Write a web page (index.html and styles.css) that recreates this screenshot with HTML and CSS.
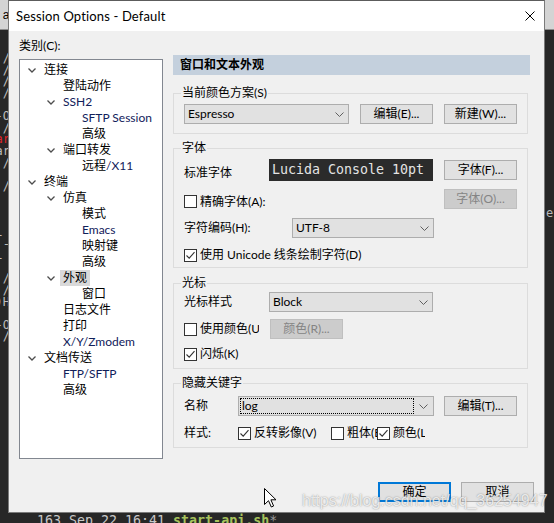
FILE: index.html
```html
<!DOCTYPE html>
<html lang="zh-CN">
<head>
<meta charset="utf-8">
<title>Session Options - Default</title>
<link rel="stylesheet" href="styles.css">
</head>
<body>
<div class="desk">
  <div class="gutter left">
    <div class="gbar"><span class="gbar-text">al</span></div>
    <pre class="frag">


/
/
/
/

O-
/
<span class="red">ar</span>
ar
/

/



 l
- :
 l

/
/
H(

O-
/
</pre>
  </div>

  <div class="dialog">
    <div class="titlebar">
      <span class="title">Session Options - Default</span>
      <svg class="close" viewBox="0 0 10 10"><path d="M0.5 0.5L9.5 9.5M9.5 0.5L0.5 9.5"/></svg>
    </div>

    <div class="main">
      <div class="cat">
        <div class="cat-label">类别(C):</div>
        <ul class="tree">
          <li class="row l0"><span class="tw"><svg class="chev" viewBox="0 0 8 5"><path d="M0.5 0.5L4 4L7.5 0.5"/></svg></span><span class="tx">连接</span></li>
          <li class="row l1"><span class="tw"></span><span class="tx">登陆动作</span></li>
          <li class="row l1"><span class="tw"><svg class="chev" viewBox="0 0 8 5"><path d="M0.5 0.5L4 4L7.5 0.5"/></svg></span><span class="tx lat">SSH2</span></li>
          <li class="row l2"><span class="tw"></span><span class="tx lat">SFTP Session</span></li>
          <li class="row l2"><span class="tw"></span><span class="tx">高级</span></li>
          <li class="row l1"><span class="tw"><svg class="chev" viewBox="0 0 8 5"><path d="M0.5 0.5L4 4L7.5 0.5"/></svg></span><span class="tx">端口转发</span></li>
          <li class="row l2"><span class="tw"></span><span class="tx">远程<span class="lat">/X11</span></span></li>
          <li class="row l0"><span class="tw"><svg class="chev" viewBox="0 0 8 5"><path d="M0.5 0.5L4 4L7.5 0.5"/></svg></span><span class="tx">终端</span></li>
          <li class="row l1"><span class="tw"><svg class="chev" viewBox="0 0 8 5"><path d="M0.5 0.5L4 4L7.5 0.5"/></svg></span><span class="tx">仿真</span></li>
          <li class="row l2"><span class="tw"></span><span class="tx">模式</span></li>
          <li class="row l2"><span class="tw"></span><span class="tx lat">Emacs</span></li>
          <li class="row l2"><span class="tw"></span><span class="tx">映射键</span></li>
          <li class="row l2"><span class="tw"></span><span class="tx">高级</span></li>
          <li class="row l1"><span class="tw"><svg class="chev" viewBox="0 0 8 5"><path d="M0.5 0.5L4 4L7.5 0.5"/></svg></span><span class="tx sel">外观</span></li>
          <li class="row l2"><span class="tw"></span><span class="tx">窗口</span></li>
          <li class="row l1"><span class="tw"></span><span class="tx">日志文件</span></li>
          <li class="row l1"><span class="tw"></span><span class="tx">打印</span></li>
          <li class="row l1"><span class="tw"></span><span class="tx lat">X/Y/Zmodem</span></li>
          <li class="row l0"><span class="tw"><svg class="chev" viewBox="0 0 8 5"><path d="M0.5 0.5L4 4L7.5 0.5"/></svg></span><span class="tx">文档传送</span></li>
          <li class="row l1"><span class="tw"></span><span class="tx lat">FTP/SFTP</span></li>
          <li class="row l1"><span class="tw"></span><span class="tx">高级</span></li>
        </ul>
      </div>

      <div class="panel">
        <div class="panel-head">窗口和文本外观</div>

        <fieldset class="group g1">
          <legend>当前颜色方案(S)</legend>
          <div class="frow r-g1">
            <div class="select w165"><span class="val">Espresso</span><svg class="arrow" viewBox="0 0 9 5"><path d="M0.5 0.5L4.5 4.5L8.5 0.5"/></svg></div>
            <button class="btn ml11">编辑(E)...</button>
            <button class="btn ml11">新建(W)...</button>
          </div>
        </fieldset>

        <fieldset class="group g2">
          <legend>字体</legend>
          <div class="frow r-font">
            <span class="lbl w85 low">标准字体</span>
            <div class="fontbox">Lucida Console 10pt</div>
            <button class="btn mlauto">字体(F)...</button>
          </div>
          <div class="frow r-exact">
            <label class="chk low"><span class="cb"></span>精确字体(A):</label>
            <button class="btn dis mlauto">字体(O)...</button>
          </div>
          <div class="frow r-enc">
            <span class="lbl w108">字符编码(H):</span>
            <div class="select w142"><span class="val">UTF-8</span><svg class="arrow" viewBox="0 0 9 5"><path d="M0.5 0.5L4.5 4.5L8.5 0.5"/></svg></div>
          </div>
          <div class="frow r-uni">
            <label class="chk"><span class="cb"><svg viewBox="0 0 11 11"><path d="M1.5 5.5L4.2 8.2L9.5 2.2"/></svg></span>使用 Unicode 线条绘制字符(D)</label>
          </div>
        </fieldset>

        <fieldset class="group g3">
          <legend>光标</legend>
          <div class="frow r-style">
            <span class="lbl w85">光标样式</span>
            <div class="select w164"><span class="val">Block</span><svg class="arrow" viewBox="0 0 9 5"><path d="M0.5 0.5L4.5 4.5L8.5 0.5"/></svg></div>
          </div>
          <div class="frow r-color">
            <label class="chk clip w75"><span class="cb"></span>使用颜色(U)</label>
            <button class="btn dis ml11">颜色(R)...</button>
          </div>
          <div class="frow r-blink">
            <label class="chk"><span class="cb"><svg viewBox="0 0 11 11"><path d="M1.5 5.5L4.2 8.2L9.5 2.2"/></svg></span>闪烁(K)</label>
          </div>
        </fieldset>

        <fieldset class="group g4">
          <legend>隐藏关键字</legend>
          <div class="frow r-name">
            <span class="lbl w54">名称</span>
            <div class="select focus w196"><span class="val">log</span><svg class="arrow" viewBox="0 0 9 5"><path d="M0.5 0.5L4.5 4.5L8.5 0.5"/></svg></div>
            <button class="btn mlauto">编辑(T)...</button>
          </div>
          <div class="frow r-kstyle">
            <span class="lbl w54">样式:</span>
            <label class="chk w93"><span class="cb"><svg viewBox="0 0 11 11"><path d="M1.5 5.5L4.2 8.2L9.5 2.2"/></svg></span>反转影像(V)</label>
            <label class="chk clip w46"><span class="cb"></span>粗体(B)</label>
            <label class="chk clip w48"><span class="cb"><svg viewBox="0 0 11 11"><path d="M1.5 5.5L4.2 8.2L9.5 2.2"/></svg></span>颜色(L)</label>
          </div>
        </fieldset>
      </div>
    </div>

    <div class="footer">
      <button class="btn default">确定</button>
      <button class="btn">取消</button>
    </div>
  </div>

  <div class="gutter right">
    <div class="gbar"></div>
    <div class="rfrag">ec</div>
  </div>
</div>
<div class="term">163 Sep 22 16:41 <span class="green">start-api.sh</span><span class="star">*</span></div>
<div class="watermark">https://blog.csdn.net/qq_36254947</div>
<svg class="cursor" viewBox="0 0 13 20"><path d="M0.5 0.5V16.5L4.5 12.7L7.3 19L9.6 18L6.9 11.8H12Z"/></svg>
</body>
</html>
```

FILE: styles.css
```css
* { box-sizing: border-box; }
html, body { margin: 0; padding: 0; }
body {
  width: 554px;
  height: 523px;
  overflow: hidden;
  position: relative;
  background: #272727;
  font-family: Lato, "Noto Sans CJK SC", sans-serif;
  font-size: 12px;
  color: #000;
}

.desk { display: flex; height: 513px; }

/* background terminal slivers */
.gutter { display: flex; flex-direction: column; overflow: hidden; flex: none; }
.gutter.left { width: 8px; }
.gutter.right { width: 9px; }
.gbar {
  height: 30px;
  flex: none;
  background: #d4d4d4;
  border-bottom: 1px solid #8c8c8c;
  display: flex;
  align-items: center;
  justify-content: flex-end;
  overflow: hidden;
}
.gbar-text { font: 12px/14px "Liberation Sans", sans-serif; color: #000; margin-right: -4px; }
.frag {
  margin: 0;
  font: 12px/11.6px "DejaVu Sans Mono", monospace;
  color: #bdbdbd;
  text-align: right;
  direction: rtl;
  white-space: pre;
  margin-right: -2px;
}
.frag .red { color: #e0262a; }
.rfrag {
  margin-top: 176px;
  font: 12px/14px "DejaVu Sans Mono", monospace;
  color: #b9b9b9;
  padding-left: 1px;
  white-space: nowrap;
}

/* dialog window */
.dialog {
  width: 537px;
  height: 513px;
  flex: none;
  background: #f0f0f0;
  border: 1px solid #7a7a7a;
  border-top-color: #5c5c5c;
  display: flex;
  flex-direction: column;
}
.titlebar {
  height: 30px;
  flex: none;
  background: #fff;
  display: flex;
  align-items: center;
  padding-left: 7px;
}
.title { font-size: 13px; color: #000; letter-spacing: 0.15px; }
.close { margin-left: auto; margin-right: 9px; width: 10px; height: 10px; }
.close path { stroke: #000; stroke-width: 1; fill: none; }

.main { display: flex; padding: 7px 0 0 10px; }

/* category tree */
.cat { width: 144px; flex: none; }
.cat-label { height: 16px; line-height: 16px; margin-bottom: 5px; }
.tree {
  list-style: none;
  margin: 0;
  height: 400px;
  border: 1px solid #828790;
  background: #fff;
  padding: 2px 0 0 0;
}
.row { height: 16px; display: flex; align-items: center; white-space: nowrap; line-height: 16px; }
.row.l0 { padding-left: 6px; }
.row.l1 { padding-left: 25px; }
.row.l2 { padding-left: 44px; }
.tw { width: 18px; flex: none; display: flex; align-items: center; }
.chev { width: 8px; height: 5px; margin-left: 2px; }
.chev path { stroke: #4d4d4d; stroke-width: 1.3; fill: none; }
.tx { color: #000; }
.lat { color: #10205a; }
.sel { background: #d9d9d9; margin-left: -3px; padding: 0 3px; }

/* right panel */
.panel { width: 357px; margin-left: 10px; margin-top: 17px; flex: none; }
.panel-head {
  height: 20px;
  line-height: 20px;
  background: #c4d0dd;
  font-weight: bold;
  padding-left: 7px;
}
.group {
  margin: 0 2px 0 0;
  min-width: 0;
  border: 1px solid #dcdcdc;
  padding: 0 10px;
}
.group legend {
  padding: 0 1px;
  margin-left: -3px;
  height: 16px;
  line-height: 16px;
}
.g1 { margin-top: 10px; padding-bottom: 9px; }
.g2 { margin-top: 6px; padding-bottom: 4px; }
.g3 { margin-top: 7px; padding-bottom: 6px; }
.g4 { margin-top: 6px; padding-bottom: 6px; }

.frow { display: flex; align-items: center; white-space: nowrap; }
.r-g1 { margin-top: 3px; height: 20px; }
.r-font { margin-top: 3px; height: 22px; }
.r-exact { margin-top: 8px; height: 20px; }
.r-enc { margin-top: 9px; height: 20px; }
.r-uni { margin-top: 9px; height: 16px; }
.r-style { margin-top: 1px; height: 20px; }
.r-color { margin-top: 7px; height: 20px; }
.r-blink { margin-top: 7px; height: 16px; }
.r-name { margin-top: 5px; height: 20px; }
.r-kstyle { margin-top: 9px; height: 16px; }

.lbl { flex: none; line-height: 16px; }
.low { padding-top: 5px; }
.w54 { width: 54px; }
.w75 { width: 75px; }
.w85 { width: 85px; }
.w93 { width: 93px; }
.w46 { width: 46px; }
.w48 { width: 48px; }
.w108 { width: 108px; }
.w142 { width: 142px; }
.w164 { width: 164px; }
.w165 { width: 165px; }
.w196 { width: 196px; }
.ml11 { margin-left: 11px; }
.mlauto { margin-left: auto; }

.select {
  flex: none;
  height: 20px;
  background: #e1e1e1;
  border: 1px solid #adadad;
  display: flex;
  align-items: center;
  padding-left: 3px;
}
.select .val { line-height: 16px; }
.select .arrow { margin-left: auto; margin-right: 4px; width: 9px; height: 5px; flex: none; }
.arrow path { stroke: #606060; stroke-width: 1; fill: none; }
.select.focus { padding-left: 0; }
.select.focus .val {
  flex: 1;
  height: 16px;
  margin-left: 1px;
  border: 1px dotted #000;
  line-height: 14px;
  padding-left: 1px;
}
.select.focus .arrow { margin-left: 5px; margin-right: 5px; }

.btn {
  flex: none;
  width: 73px;
  height: 20px;
  padding: 0;
  margin-top: 0;
  margin-bottom: 0;
  background: #e1e1e1;
  border: 1px solid #adadad;
  font: inherit;
  color: #000;
  display: flex;
  align-items: center;
  justify-content: center;
  line-height: 16px;
}
.btn.dis { background: #cccccc; border-color: #bfbfbf; color: #848484; }
.btn.default { border: 2px solid #0078d7; }

.fontbox {
  flex: none;
  width: 164px;
  height: 22px;
  background: #2b2b2b;
  color: #e4e4e4;
  font: 13.3px/22px "DejaVu Sans Mono", monospace;
  padding-left: 3px;
  white-space: nowrap;
  overflow: hidden;
}

.chk { display: flex; align-items: center; flex: none; line-height: 16px; }
.chk.clip { overflow: hidden; }
.cb {
  width: 13px;
  height: 13px;
  flex: none;
  border: 1px solid #333;
  background: #fff;
  margin-right: 3px;
  display: flex;
}
.cb svg { width: 11px; height: 11px; }
.cb path { stroke: #333; stroke-width: 1.1; fill: none; }

.footer {
  margin-top: auto;
  display: flex;
  justify-content: flex-end;
  gap: 10px;
  padding: 0 10px 10px 0;
}

/* terminal line below the dialog */
.term {
  height: 10px;
  padding-left: 37px;
  font: 13.3px/16px "DejaVu Sans Mono", monospace;
  color: #c8c8c8;
  white-space: pre;
  margin-top: 0;
}
.green { color: #a6c25c; font-weight: bold; }
.star { color: #9a9a9a; }

/* overlays */
.watermark {
  position: absolute;
  left: 302px;
  top: 493px;
  font: 16px/16px "Liberation Sans", Arial, sans-serif;
  color: rgba(255, 255, 255, 0.8);
  text-shadow: 0 0 1.5px rgba(80, 80, 80, 0.7);
  white-space: nowrap;
}
.cursor { position: absolute; left: 264px; top: 488px; width: 13px; height: 20px; }
.cursor path { fill: #fff; stroke: #000; stroke-width: 1; }
```
